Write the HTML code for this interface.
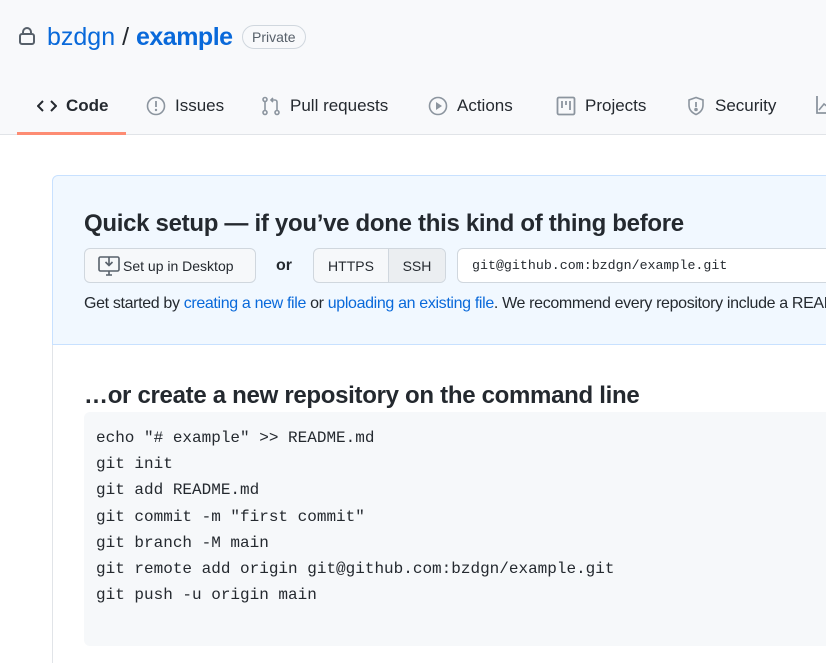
<!DOCTYPE html>
<html><head><meta charset="utf-8"><style>
*{box-sizing:border-box;margin:0;padding:0}
body{width:826px;height:663px;overflow:hidden;background:#fff;font-family:"Liberation Sans",sans-serif;color:#24292f;position:relative}
.hdr{position:absolute;left:0;top:0;width:826px;height:135px;background:#f8f9fb;border-bottom:1px solid #e1e4e8}
.abs{position:absolute;white-space:nowrap}
a{color:#0969da;text-decoration:none}
.tab{position:absolute;top:96px;font-size:17px;color:#24292f;display:flex;align-items:center;gap:9px}
.tab svg{flex:none}
.box{position:absolute;left:52px;top:175px;width:800px;height:170px;background:#f1f8ff;border:1px solid #c8e1ff;border-radius:6px 0 0 0}
.btn{position:absolute;top:248px;height:35px;border:1px solid #d0d7de;border-radius:6px;background:#f6f8fa;font-size:14px;display:flex;align-items:center}
.mono{font-family:"Liberation Mono",monospace}
.code{position:absolute;left:84px;top:412px;width:760px;height:234px;background:#f6f8fa;border-radius:6px;padding:13px 12px;font-size:16px;line-height:26.2px;white-space:pre}
</style></head><body>
<div class="hdr"></div>
<svg class="abs" style="left:18px;top:26px" width="18" height="20" viewBox="0 0 18 20"><rect x="2" y="8" width="14" height="10" rx="2" fill="none" stroke="#57606a" stroke-width="2"/><path d="M5 8V6a4 4 0 0 1 8 0v2" fill="none" stroke="#57606a" stroke-width="2"/></svg>
<div class="abs" style="left:47px;top:23px;font-size:25px"><a>bzdgn</a> <span style="color:#24292f">/</span> <a style="font-weight:bold;letter-spacing:-0.5px">example</a></div>
<div class="abs" style="left:242px;top:25px;height:24px;border:1px solid #d0d7de;border-radius:12px;padding:0 9px;font-size:14px;line-height:22px;color:#57606a">Private</div>
<div class="tab" style="left:37px;font-weight:bold"><svg width="20" height="14" viewBox="0 0 20 14"><path d="M6 2 1 7l5 5M14 2l5 5-5 5" fill="none" stroke="#24292f" stroke-width="2"/></svg>Code</div>
<div class="abs" style="left:17px;top:132px;width:109px;height:3px;background:#fd8c73"></div>
<div class="tab" style="left:146px"><svg width="20" height="20" viewBox="0 0 20 20"><circle cx="10" cy="10" r="8.5" fill="none" stroke="#8c959f" stroke-width="1.6"/><path d="M10 5v6" stroke="#8c959f" stroke-width="1.8"/><circle cx="10" cy="14" r="1.2" fill="#8c959f"/></svg>Issues</div>
<div class="tab" style="left:261px"><svg width="20" height="20" viewBox="0 0 20 20" fill="none" stroke="#8c959f" stroke-width="1.6"><circle cx="4" cy="3.5" r="2"/><circle cx="4" cy="16.5" r="2"/><circle cx="16" cy="16.5" r="2"/><path d="M4 5.5v9M16 14.5V6a2 2 0 0 0-2-2h-4M12 2 10 4l2 2"/></svg>Pull requests</div>
<div class="tab" style="left:428px"><svg width="20" height="20" viewBox="0 0 20 20"><circle cx="10" cy="10" r="8.5" fill="none" stroke="#8c959f" stroke-width="1.6"/><path d="M8 6v8l6-4z" fill="#8c959f"/></svg>Actions</div>
<div class="tab" style="left:556px"><svg width="20" height="20" viewBox="0 0 20 20" fill="none" stroke="#8c959f" stroke-width="1.8"><rect x="1.5" y="1.5" width="17" height="17" rx="1.5"/><path d="M6 5v7M10 5v4M14 5v9"/></svg>Projects</div>
<div class="tab" style="left:686px"><svg width="20" height="20" viewBox="0 0 20 20" fill="none" stroke="#8c959f" stroke-width="1.6"><path d="M10 1.5 3 4v5c0 5 3.5 8 7 9.5 3.5-1.5 7-4.5 7-9.5V4z"/><path d="M10 6v5" stroke-width="1.8"/><circle cx="10" cy="13.5" r="1" fill="#8c959f"/></svg>Security</div>
<svg class="abs" style="left:816px;top:96px" width="12" height="18"><path d="M1 0v17h11" fill="none" stroke="#8c959f" stroke-width="1.8"/><path d="M3 14l5-6 4 3" fill="none" stroke="#8c959f" stroke-width="1.6"/></svg>
<div class="abs" style="left:52px;top:345px;width:1px;height:318px;background:#e1e4e8"></div>
<div class="box"></div>
<div class="abs" style="left:84px;top:210px;font-size:24px;font-weight:bold;letter-spacing:-0.3px">Quick setup — if you’ve done this kind of thing before</div>
<div class="btn" style="left:84px;width:172px;padding-left:13px"><svg width="22" height="22" viewBox="0 0 22 22" fill="none" stroke="#57606a" stroke-width="1.6"><rect x="1" y="2" width="20" height="14" rx="1.5"/><path d="M11 2v8M7.5 7l3.5 3.5L14.5 7M8 20h6M11 16v4"/></svg><span style="margin-left:3px">Set up in Desktop</span></div>
<div class="abs" style="left:276px;top:257px;font-size:16px;font-weight:bold">or</div>
<div class="btn" style="left:313px;width:133px;overflow:hidden"><span style="width:74px;text-align:center;background:#f6f8fa">HTTPS</span><span style="flex:1;height:100%;background:#ebeef1;border-left:1px solid #d0d7de;display:flex;align-items:center;justify-content:center">SSH</span></div>
<div class="abs mono" style="left:457px;top:248px;width:400px;height:35px;border:1px solid #d0d7de;border-radius:6px;background:#fff;font-size:13.3px;line-height:33px;padding-left:14px">git@github.com:bzdgn/example.git</div>
<div class="abs" style="left:84px;top:295px;font-size:16px;letter-spacing:-0.35px">Get started by <a>creating a new file</a> or <a>uploading an existing file</a>. We recommend every repository include a README</div>
<div class="abs" style="left:84px;top:382px;font-size:24px;font-weight:bold;letter-spacing:-0.3px">…or create a new repository on the command line</div>
<div class="code mono">echo "# example" &gt;&gt; README.md
git init
git add README.md
git commit -m "first commit"
git branch -M main
git remote add origin git@github.com:bzdgn/example.git
git push -u origin main</div>
</body></html>
